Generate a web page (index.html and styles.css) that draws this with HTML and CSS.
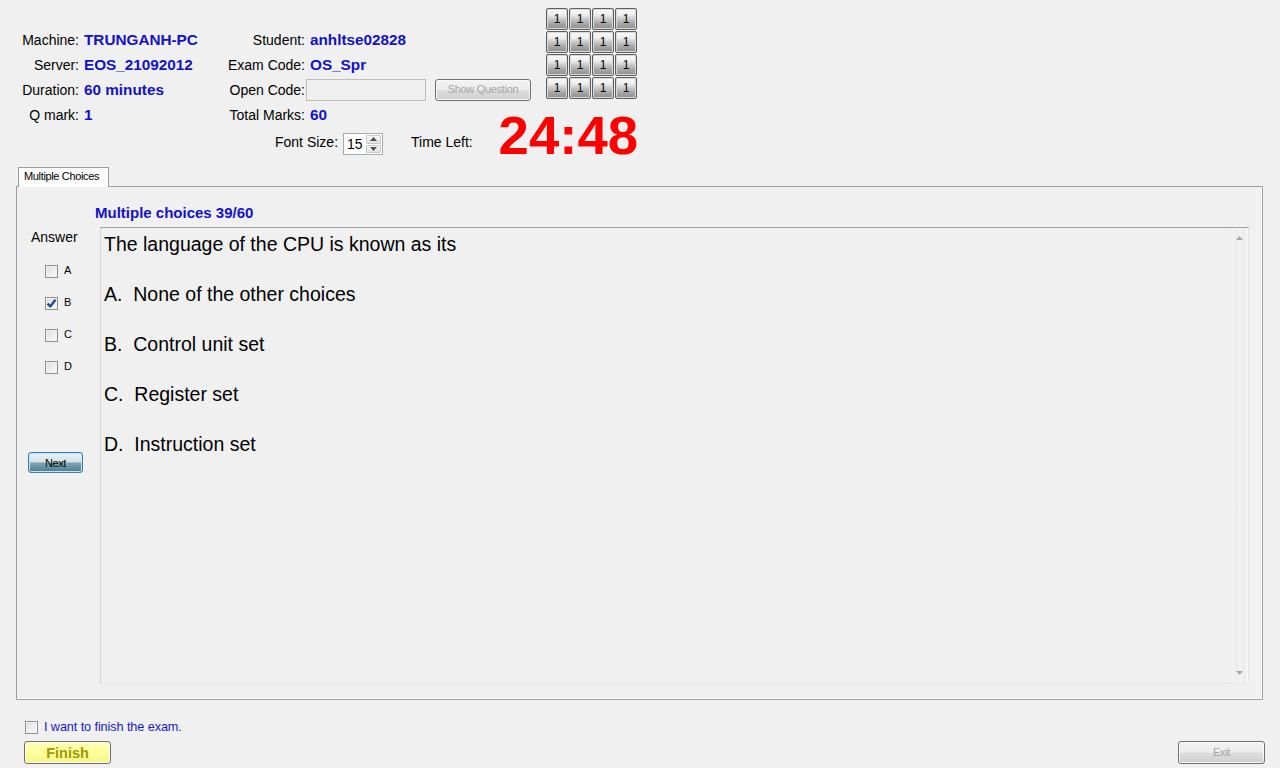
FILE: index.html
```html
<!DOCTYPE html>
<html>
<head>
<meta charset="utf-8">
<title>Exam</title>
<link rel="stylesheet" href="styles.css">
</head>
<body>
<div class="app">
  <header class="header">
    <div class="hleft">
      <div class="info">
        <span class="lbl">Machine:</span><span class="val">TRUNGANH-PC</span>
        <span class="lbl">Student:</span><span class="val">anhltse02828</span>
        <span class="lbl">Server:</span><span class="val">EOS_21092012</span>
        <span class="lbl">Exam Code:</span><span class="val">OS_Spr</span>
        <span class="lbl">Duration:</span><span class="val">60 minutes</span>
        <span class="lbl">Open Code:</span>
        <span class="open"><span class="input"></span><span class="wbtn dis show">Show Question</span></span>
        <span class="lbl">Q mark:</span><span class="val">1</span>
        <span class="lbl">Total Marks:</span><span class="val">60</span>
      </div>
      <div class="fontrow">
        <span class="flbl">Font Size:</span>
        <span class="spin">
          <span class="spin-val">15</span>
          <span class="spin-btns">
            <span class="sb"><svg width="7" height="4" viewBox="0 0 7 4"><path d="M0 4 L3.5 0 L7 4Z" fill="#4d4d4d"/></svg></span>
            <span class="sb"><svg width="7" height="4" viewBox="0 0 7 4"><path d="M0 0 L3.5 4 L7 0Z" fill="#4d4d4d"/></svg></span>
          </span>
        </span>
        <span class="tlbl">Time Left:</span>
      </div>
    </div>
    <div class="hright">
      <div class="qgrid">
        <span class="qb">1</span><span class="qb">1</span><span class="qb">1</span><span class="qb">1</span>
        <span class="qb">1</span><span class="qb">1</span><span class="qb">1</span><span class="qb">1</span>
        <span class="qb">1</span><span class="qb">1</span><span class="qb">1</span><span class="qb">1</span>
        <span class="qb">1</span><span class="qb">1</span><span class="qb">1</span><span class="qb">1</span>
      </div>
      <div class="timer">24:48</div>
    </div>
  </header>

  <section class="tabs">
    <div class="tabstrip"><span class="tab">Multiple Choices</span></div>
    <div class="panel">
      <div class="qtitle">Multiple choices 39/60</div>
      <div class="qbody">
        <div class="answers">
          <div class="ans-title">Answer</div>
          <label class="chk"><span class="box"></span><span class="chk-l">A</span></label>
          <label class="chk"><span class="box"><svg width="11" height="11" viewBox="0 0 11 11"><path d="M1.6 5.6 L4.3 8.4 L9.4 1.8" fill="none" stroke="#24498f" stroke-width="2.4" stroke-linejoin="round"/></svg></span><span class="chk-l">B</span></label>
          <label class="chk"><span class="box"></span><span class="chk-l">C</span></label>
          <label class="chk"><span class="box"></span><span class="chk-l">D</span></label>
          <span class="next">Next</span>
        </div>
        <div class="qbox">
          <div class="qtext">
            <div class="ql">The language of the CPU is known as its</div>
            <div class="ql">A.&nbsp; None of the other choices</div>
            <div class="ql">B.&nbsp; Control unit set</div>
            <div class="ql">C.&nbsp; Register set</div>
            <div class="ql">D.&nbsp; Instruction set</div>
          </div>
          <div class="vscroll">
            <svg width="7" height="4" viewBox="0 0 7 4"><path d="M0 4 L3.5 0 L7 4Z" fill="#a8a8a8"/></svg>
            <svg width="7" height="4" viewBox="0 0 7 4"><path d="M0 0 L3.5 4 L7 0Z" fill="#a8a8a8"/></svg>
          </div>
        </div>
      </div>
    </div>
  </section>

  <footer class="footer">
    <div class="fleft">
      <label class="finish-chk"><span class="box"></span><span class="fc-l">I want to finish the exam.</span></label>
      <span class="finish">Finish</span>
    </div>
    <span class="wbtn dis exit">Exit</span>
  </footer>
</div>
</body>
</html>
```

FILE: styles.css
```css
* { box-sizing: border-box; }
html, body { margin: 0; padding: 0; }
body {
  background: #f0f0f0;
  font-family: "Liberation Sans", Arial, sans-serif;
  color: #000;
  width: 1280px;
  height: 768px;
  overflow: hidden;
}
.app { width: 1280px; height: 768px; }

/* header */
.header { display: flex; height: 167px; }
.hleft { width: 545px; display: flex; flex-direction: column; }
.info {
  margin-top: 27px;
  display: grid;
  grid-template-columns: 79px 143px 84px auto;
  grid-auto-rows: 25px;
  align-items: center;
  font-size: 14px;
}
.lbl { text-align: right; white-space: nowrap; }
.info .lbl:nth-child(4n+3) { padding-right: 1px; }
.val { padding-left: 5px; font-weight: bold; font-size: 15.3px; color: #1212c8; white-space: nowrap; }
.info .val:nth-child(4n) { padding-left: 4px; }
.open { display: flex; align-items: center; gap: 9px; }
.input { width: 120px; height: 22px; border: 1px solid #bcbcbc; background: #f0f0f0; }
.wbtn {
  display: flex; align-items: center; justify-content: center;
  border: 1px solid #707070; border-radius: 3px;
  font-size: 11px; letter-spacing: -0.3px; padding-bottom: 2px;
}
.dis {
  color: #a6a6a6;
  background: linear-gradient(#f3f3f3 0%, #ebebeb 48%, #dddddd 52%, #cfcfcf 100%);
  box-shadow: inset 0 0 0 1px #f8f8f8;
}
.show { width: 96px; height: 22px; }

.fontrow { margin-top: 6px; height: 22px; display: flex; align-items: center; padding-left: 275px; font-size: 14px; }
.flbl { position: relative; top: -2px; }
.spin {
  margin-left: 5px; width: 40px; height: 22px; border: 1px solid #a9abb2;
  background: #fff; display: flex; align-items: stretch;
}
.spin-val { flex: 1; padding-left: 3px; line-height: 20px; font-size: 14px; }
.spin-btns { width: 16px; display: flex; flex-direction: column; padding: 1px 1px 1px 0; gap: 1px; }
.sb {
  flex: 1; display: flex; align-items: center; justify-content: center;
  background: linear-gradient(#f6f6f6, #e2e2e2); border: 1px solid #c9c9c9; border-radius: 1px;
}
.tlbl { margin-left: 28px; position: relative; top: -2px; }

.hright { width: 92px; display: flex; flex-direction: column; align-items: flex-end; padding-top: 8px; }
.qgrid { display: grid; grid-template-columns: repeat(4, 22px); grid-auto-rows: 22px; gap: 1px; }
.qb {
  border: 1px solid #5e5e5e; border-radius: 2px;
  background: linear-gradient(#fafafa 0%, #ededed 30%, #c9c9c9 50%, #a4a4a4 75%, #8f8f8f 100%);
  box-shadow: inset 0 0 0 1px #d9d9d9;
  font-size: 12px; display: flex; align-items: center; justify-content: center;
  line-height: 1;
}
.timer {
  margin-top: 9px; margin-right: -1px; white-space: nowrap; font-size: 54.5px; line-height: 55px;
  font-weight: bold; color: #ff0000;
}

/* tabs */
.tabs { margin: 0 17px 0 16px; }
.tabstrip { height: 19px; display: flex; }
.tab {
  margin-left: 2px; width: 91px; height: 20px; position: relative; z-index: 1;
  background: #fcfcfc; border: 1px solid #9c9c9c; border-bottom: none;
  font-size: 11px; letter-spacing: -0.35px; padding: 2px 0 0 5px; white-space: nowrap;
}
.panel {
  height: 514px; border: 1px solid #9f9f9f; background: #f0f0f0;
  box-shadow: inset -1px -1px 0 #ffffff;
}
.qtitle { padding: 17px 0 0 78px; font-size: 15px; line-height: 18px; font-weight: bold; color: #1212c8; }
.qbody { margin-top: 5px; display: flex; }
.answers { width: 83px; display: flex; flex-direction: column; align-items: flex-start; }
.ans-title { margin: 2px 0 0 14px; font-size: 14px; line-height: 16px; }
.chk { display: flex; align-items: center; height: 32px; margin-left: 28px; font-size: 11px; }
.chk:first-of-type { margin-top: 10px; }
.box {
  width: 13px; height: 13px; border: 1px solid #8e8f8f;
  background: linear-gradient(135deg, #dadada 0%, #ededed 50%, #fbfbfb 100%);
  box-shadow: inset 0 0 0 1px #f2f2f2;
  display: flex; align-items: center; justify-content: center;
}
.chk-l { margin-left: 6px; position: relative; top: -1px; }
.next {
  margin: 69px 0 0 11px; width: 55px; height: 21px;
  border: 1px solid #3b7da5; border-radius: 3px;
  background: linear-gradient(#e8f2f6 0%, #d3e3ea 45%, #7ea2b0 55%, #4f7b8b 100%);
  box-shadow: inset 0 0 0 1px #bfe4f5;
  font-size: 11px; letter-spacing: -0.4px;
  display: flex; align-items: center; justify-content: center;
}
.qbox {
  flex: 1; margin-right: 13px; height: 457px; display: flex;
  border: 1px solid; border-color: #a0a0a0 #e6e6e6 #e6e6e6 #d4d4d4;
}
.qtext { flex: 1; padding: 4px 0 0 3px; font-size: 19.5px; line-height: 24px; }
.ql { margin-bottom: 26px; white-space: nowrap; }
.vscroll {
  width: 17px; display: flex; flex-direction: column; align-items: center; justify-content: space-between;
  padding: 8px 0 8px;
  background: linear-gradient(90deg, #e9e9e9 0px, #f4f4f4 2px, #ececec 5px, #f3f3f3 9px, #ebebeb 13px, #f5f5f5 16px);
}

/* footer */
.footer { margin-top: 19px; display: flex; justify-content: space-between; align-items: flex-end; padding: 0 15px 0 24px; }
.fleft { display: flex; flex-direction: column; }
.finish-chk { display: flex; align-items: center; height: 16px; margin-left: 1px; }
.fc-l { margin-left: 6px; font-size: 12.7px; color: #1818d0; letter-spacing: -0.1px; }
.finish {
  margin-top: 6px; width: 87px; height: 23px;
  border: 1px solid #6f6f6f; border-radius: 3px;
  background: linear-gradient(#ffffb8 0%, #ffff9c 50%, #f5f58a 100%);
  box-shadow: inset 0 0 0 1px #fffff0;
  color: #9c9a00; font-weight: bold; font-size: 14.5px;
  display: flex; align-items: center; justify-content: center;
}
.exit { width: 87px; height: 23px; }
```
